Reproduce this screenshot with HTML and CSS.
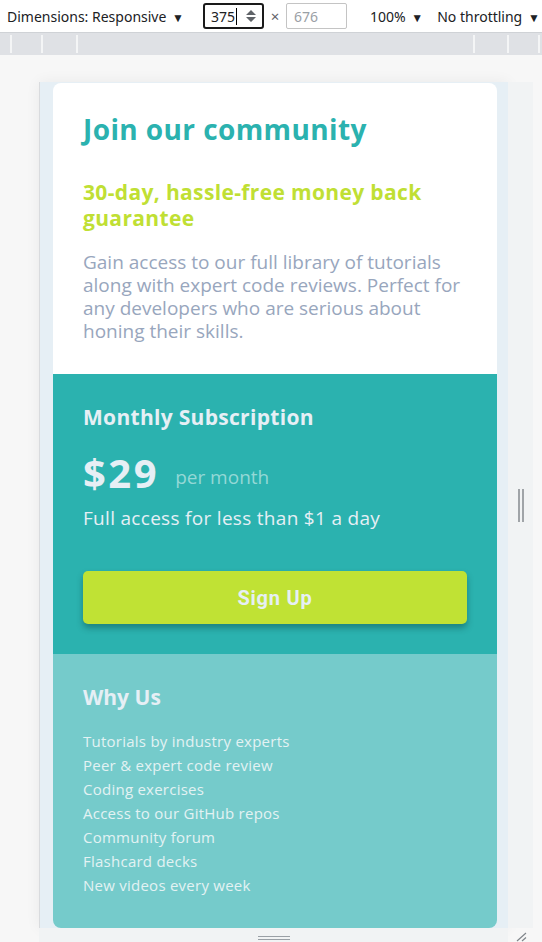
FILE: index.html
```html
<!DOCTYPE html>
<html lang="en">
<head>
<meta charset="utf-8">
<title>Single price grid</title>
<link rel="stylesheet" href="styles.css">
</head>
<body>
<div class="toolbar">
  <span class="dims">Dimensions: Responsive <span class="caret">▼</span></span>
  <div class="num-input focused"><span class="num">375</span><span class="cursor"></span>
    <svg class="spin" width="12" height="14" viewBox="0 0 12 14"><path d="M6 1 L11 6 H1 Z M1 8 H11 L6 13 Z" fill="#5f6368"/></svg>
  </div>
  <span class="times">×</span>
  <div class="num-input"><span class="num muted">676</span></div>
  <span class="zoom">100% <span class="caret">▼</span></span>
  <span class="throttle">No throttling <span class="caret">▼</span></span>
</div>
<div class="ruler">
  <div class="ticks">
    <span class="tick t1"></span><span class="tick t2"></span><span class="tick t3"></span>
  </div>
  <div class="ticks">
    <span class="tick t4"></span><span class="tick t5"></span><span class="tick t6"></span>
  </div>
</div>
<div class="stage">
  <div class="device">
    <div class="viewport">
      <main class="card">
        <section class="intro">
          <h1 class="title">Join our community</h1>
          <h2 class="guarantee">30-day, hassle-free money back guarantee</h2>
          <p class="desc">Gain access to our full library of tutorials along with expert code reviews. Perfect for any developers who are serious about honing their skills.</p>
        </section>
        <section class="subscription">
          <h3 class="sub-title">Monthly Subscription</h3>
          <div class="price-row"><span class="price">$29</span><span class="per">per month</span></div>
          <p class="access">Full access for less than $1 a day</p>
          <button class="signup">Sign Up</button>
        </section>
        <section class="why">
          <h3 class="why-title">Why Us</h3>
          <ul class="why-list">
            <li>Tutorials by industry experts</li>
            <li>Peer &amp; expert code review</li>
            <li>Coding exercises</li>
            <li>Access to our GitHub repos</li>
            <li>Community forum</li>
            <li>Flashcard decks</li>
            <li>New videos every week</li>
          </ul>
        </section>
      </main>
    </div>
    <div class="bottom-handle"><span class="hbar"></span></div>
  </div>
  <div class="side">
    <div class="right-handle"><span class="vbar"></span><span class="vbar"></span></div>
    <div class="corner">
      <svg width="14" height="12" viewBox="0 0 14 12"><path d="M3 11 L12 3 M8 11 L12 7.5" stroke="#80868b" stroke-width="1.2" fill="none"/></svg>
    </div>
  </div>
</div>
</body>
</html>
```
FILE: styles.css
```css
* { box-sizing: border-box; }
html, body { margin: 0; padding: 0; }
body {
  width: 542px;
  height: 942px;
  overflow: hidden;
  background: #f7f7f7;
  font-family: "Noto Sans", "Open Sans", sans-serif;
  color: #202124;
}

/* ---- devtools toolbar ---- */
.toolbar {
  height: 33px;
  background: #ffffff;
  border-bottom: 1px solid #cfd2d6;
  display: flex;
  align-items: center;
  font-size: 14px;
  padding-left: 7px;
  white-space: nowrap;
}
.caret { font-size: 12px; margin-left: 2px; }
.dims { width: 196px; }
.num-input {
  width: 61px;
  height: 26px;
  border: 1px solid #c4c4c4;
  border-radius: 2px;
  display: flex;
  align-items: center;
  padding-left: 7px;
  background: #fff;
}
.num-input.focused {
  width: 61px;
  border: 2px solid #1a1a1a;
  border-radius: 3px;
  padding-left: 6px;
}
.num { font-size: 14px; }
.muted { color: #9aa0a6; }
.cursor { width: 1px; height: 17px; background: #000; margin-left: 1px; }
.spin { margin-left: 8px; }
.times { width: 22px; text-align: center; color: #5f6368; font-size: 15px; }
.zoom { margin-left: 23px; }
.throttle { margin-left: 14px; }

/* ---- ruler ---- */
.ruler {
  height: 22px;
  background: #dfe1e5;
  display: flex;
  justify-content: space-between;
  align-items: center;
}
.ticks { display: flex; }
.tick { width: 2px; height: 18px; background: #f4f5f6; }
.t1 { margin-left: 10px; }
.t2 { margin-left: 29px; }
.t3 { margin-left: 33px; }
.t5 { margin-left: 32px; }
.t6 { margin-left: 29px; margin-right: 2px; }

/* ---- device frame ---- */
.stage {
  display: flex;
  padding-top: 27px;
  padding-left: 39px;
}
.device { display: flex; flex-direction: column; }
.viewport {
  width: 469px;
  height: 846px;
  background: #e6eff5;
  border-left: 1px solid #d9dbde;
  padding: 1px 11px 0 13px;
  box-shadow: 0 0 14px rgba(0, 0, 0, 0.06);
}
.bottom-handle {
  height: 14px;
  background: #f1f3f4;
  display: flex;
  justify-content: center;
  padding-top: 8px;
}
.hbar {
  width: 32px;
  height: 4px;
  border-top: 1px solid #9aa0a6;
  border-bottom: 1px solid #9aa0a6;
}
.side { display: flex; flex-direction: column; width: 25px; }
.right-handle {
  height: 846px;
  background: #f1f3f4;
  display: flex;
  justify-content: center;
  align-items: center;
  gap: 2px;
}
.vbar { width: 2px; height: 33px; background: #a0a4a8; }
.corner {
  height: 14px;
  display: flex;
  align-items: flex-end;
  justify-content: center;
}

/* ---- the page ---- */
.card {
  height: 845px;
  border-radius: 8px;
  overflow: hidden;
  display: flex;
  flex-direction: column;
  font-family: "Open Sans", "Noto Sans", sans-serif;
}
.intro {
  background: #ffffff;
  height: 291px;
  padding: 29px 30px 0;
}
.title {
  margin: 0;
  font-size: 28px;
  line-height: 34px;
  font-weight: 700;
  letter-spacing: 0.4px;
  color: #2bb2af;
}
.guarantee {
  margin: 33px 0 0;
  font-size: 21px;
  line-height: 26px;
  font-weight: 700;
  letter-spacing: 0.35px;
  color: #c0df34;
}
.desc {
  margin: 20px 0 0;
  font-size: 19px;
  line-height: 23px;
  color: #98a6bd;
}
.subscription {
  background: #2bb2af;
  height: 280px;
  padding: 30px 30px 0;
  color: #e6eff5;
}
.sub-title {
  margin: 0;
  font-size: 21px;
  line-height: 26px;
  font-weight: 700;
  letter-spacing: 0.3px;
}
.price-row {
  display: flex;
  align-items: flex-end;
  margin-top: 21px;
  height: 44px;
}
.price { font-size: 40px; font-weight: 700; line-height: 44px; letter-spacing: 2.5px; }
.per { font-size: 19px; line-height: 35px; margin-left: 16px; color: #94d8d6; }
.access {
  margin: 11px 0 0;
  font-size: 19px;
  line-height: 24px;
  letter-spacing: 0.3px;
}
.signup {
  display: block;
  margin-top: 41px;
  width: 100%;
  height: 53px;
  border: none;
  border-radius: 5px;
  background: #c0e234;
  color: #e6eff5;
  font-family: Roboto, "Liberation Sans", sans-serif;
  font-weight: 700;
  font-size: 20px;
  letter-spacing: 0.8px;
  box-shadow: 0 4px 6px rgba(0, 40, 40, 0.35);
}
.why {
  background: #75cbcb;
  flex: 1;
  padding: 30px 30px 0;
  color: #e6eff5;
}
.why-title {
  margin: 0;
  font-size: 21px;
  line-height: 26px;
  font-weight: 700;
}
.why-list {
  list-style: none;
  margin: 19px 0 0;
  padding: 0;
  font-size: 15px;
  line-height: 24px;
  letter-spacing: 0.25px;
  color: #e3f2f3;
}
```
